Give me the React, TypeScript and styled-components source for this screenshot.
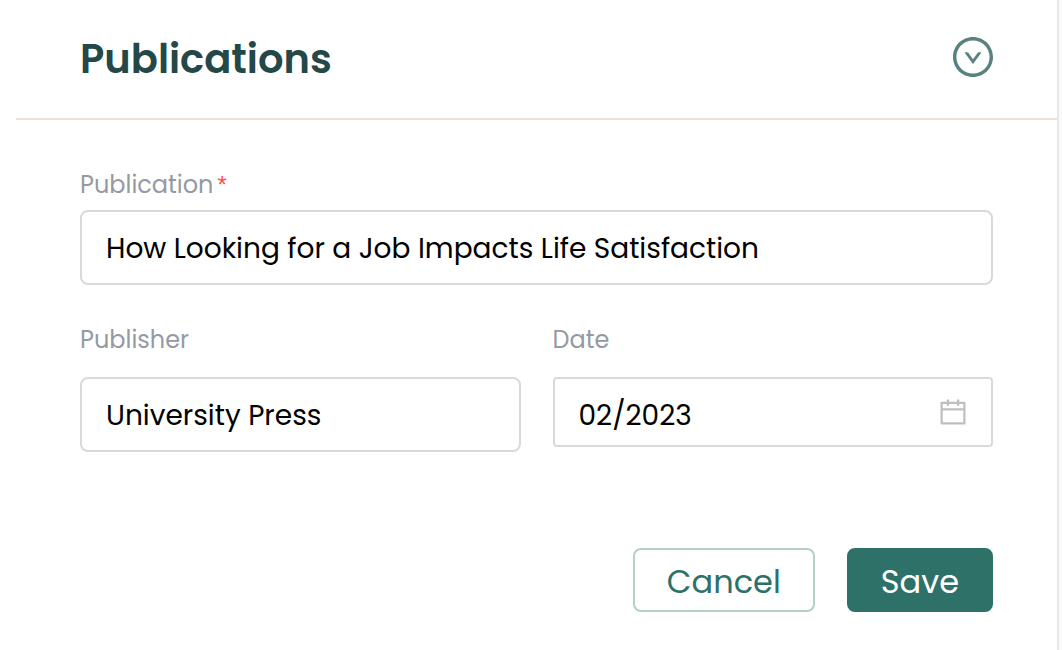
import React, { useState } from 'react';
import styled, { createGlobalStyle } from 'styled-components';

const GlobalStyle = createGlobalStyle`
  *, *::before, *::after { box-sizing: border-box; }
  body {
    margin: 0;
    background: #fafafa;
    font-family: Poppins, Inter, sans-serif;
  }
  button, input { font-family: inherit; }
`;

const Panel = styled.section`
  min-height: 100vh;
  margin-right: 3px;
  padding-left: 16px;
  background: #fff;
  border-right: 2px solid #e8e8e8;
`;

const Header = styled.header`
  display: flex;
  align-items: center;
  justify-content: space-between;
  height: 120px;
  padding: 0 64px 4px;
  border-bottom: 2px solid #ece2da;
`;

const Title = styled.h2`
  margin: 0;
  padding-top: 4px;
  font-size: 40px;
  line-height: 60px;
  font-weight: 600;
  color: #244848;
`;

const CollapseButton = styled.button`
  display: flex;
  padding: 0;
  border: 0;
  background: none;
  color: #58827f;
  cursor: pointer;
`;

const Form = styled.form`
  padding: 40px 64px 32px;
`;

const Columns = styled.div`
  display: grid;
  grid-template-columns: repeat(2, minmax(0, 1fr));
  align-items: start;
  gap: 32px;
  margin-top: 30px;
`;

const Field = styled.div<{ $gap?: number }>`
  display: flex;
  flex-direction: column;
  gap: ${(p) => p.$gap ?? 0}px;
`;

const Label = styled.label`
  font-size: 24px;
  line-height: 50px;
  color: #9599a3;
`;

const Required = styled.span`
  margin-left: 4px;
  font-family: "Liberation Sans", sans-serif;
  color: #ff4d4f;
`;

const InputBox = styled.div<{ $compact?: boolean }>`
  display: flex;
  align-items: center;
  gap: 16px;
  height: ${(p) => (p.$compact ? 70 : 75)}px;
  padding: 0 24px;
  border: 2px solid #d9d9d9;
  border-radius: ${(p) => (p.$compact ? 4 : 8)}px;
  color: #bfbfbf;
  &:focus-within { border-color: #2e7169; }
`;

const Input = styled.input<{ $compact?: boolean }>`
  flex: 1;
  min-width: 0;
  height: 100%;
  padding: ${(p) => (p.$compact ? 8 : 2)}px 0 0;
  border: 0;
  outline: 0;
  background: none;
  font-size: 28px;
  color: #000;
`;

const Actions = styled.div`
  display: flex;
  justify-content: flex-end;
  gap: 32px;
  margin-top: 96px;
`;

const Button = styled.button<{ $primary?: boolean }>`
  height: 64px;
  padding: 4px 32px 0;
  border: 2px solid ${(p) => (p.$primary ? '#2e7169' : '#b5cfcb')};
  border-radius: 8px;
  background: ${(p) => (p.$primary ? '#2e7169' : '#fff')};
  color: ${(p) => (p.$primary ? '#fff' : '#2e7169')};
  font-size: 32px;
  line-height: 48px;
  cursor: pointer;
`;

const DownCircleIcon = () => (
  <svg width="40" height="40" viewBox="64 64 896 896" fill="currentColor" aria-hidden="true">
    <path d="M690 405h-46.9c-10.2 0-19.9 4.9-25.9 13.2L512 563.6 406.8 418.2c-6-8.3-15.6-13.2-25.9-13.2H334c-6.5 0-10.3 7.4-6.5 12.7l178 246c3.2 4.4 9.7 4.4 12.9 0l178-246c3.9-5.3.1-12.7-6.4-12.7z" />
    <path d="M512 64C264.6 64 64 264.6 64 512s200.6 448 448 448 448-200.6 448-448S759.4 64 512 64zm0 820c-205.4 0-372-166.6-372-372s166.6-372 372-372 372 166.6 372 372-166.6 372-372 372z" />
  </svg>
);

const CalendarIcon = () => (
  <svg width="28" height="28" viewBox="64 64 896 896" fill="currentColor" aria-hidden="true">
    <path d="M880 184H712v-64c0-4.4-3.6-8-8-8h-56c-4.4 0-8 3.6-8 8v64H384v-64c0-4.4-3.6-8-8-8h-56c-4.4 0-8 3.6-8 8v64H144c-17.7 0-32 14.3-32 32v664c0 17.7 14.3 32 32 32h736c17.7 0 32-14.3 32-32V216c0-17.7-14.3-32-32-32zm-40 656H184V460h656v380zM184 392V256h128v48c0 4.4 3.6 8 8 8h56c4.4 0 8-3.6 8-8v-48h256v48c0 4.4 3.6 8 8 8h56c4.4 0 8-3.6 8-8v-48h128v136H184z" />
  </svg>
);

export default function App() {
  const [publication, setPublication] = useState('How Looking for a Job Impacts Life Satisfaction');
  const [publisher, setPublisher] = useState('University Press');
  const [date, setDate] = useState('02/2023');

  return (
    <>
      <GlobalStyle />
      <Panel>
        <Header>
          <Title>Publications</Title>
          <CollapseButton type="button" aria-label="Collapse publications">
            <DownCircleIcon />
          </CollapseButton>
        </Header>
        <Form onSubmit={(e) => e.preventDefault()}>
          <Field>
            <Label htmlFor="publication">
              Publication<Required>*</Required>
            </Label>
            <InputBox>
              <Input id="publication" required value={publication} onChange={(e) => setPublication(e.target.value)} />
            </InputBox>
          </Field>
          <Columns>
            <Field $gap={12}>
              <Label htmlFor="publisher">Publisher</Label>
              <InputBox>
                <Input id="publisher" value={publisher} onChange={(e) => setPublisher(e.target.value)} />
              </InputBox>
            </Field>
            <Field $gap={12}>
              <Label htmlFor="date">Date</Label>
              <InputBox $compact>
                <Input $compact id="date" value={date} onChange={(e) => setDate(e.target.value)} />
                <CalendarIcon />
              </InputBox>
            </Field>
          </Columns>
          <Actions>
            <Button type="button">Cancel</Button>
            <Button type="submit" $primary>Save</Button>
          </Actions>
        </Form>
      </Panel>
    </>
  );
}
